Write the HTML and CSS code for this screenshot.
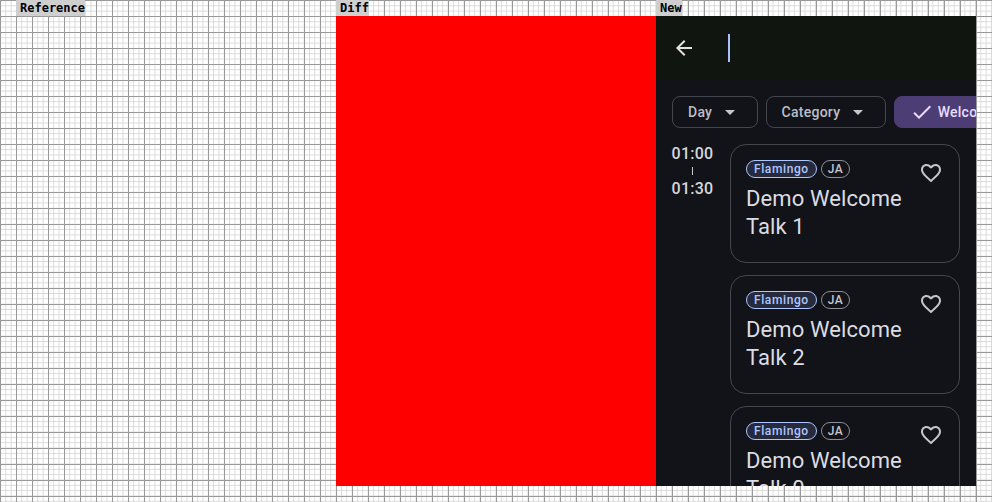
FILE: index.html
```html
<!DOCTYPE html>
<html lang="en">
<head>
<meta charset="utf-8">
<title>Timetable search comparison</title>
<link rel="stylesheet" href="styles.css">
</head>
<body>
<main class="stage">
  <section class="col">
    <div class="label">Reference</div>
    <div class="panel"></div>
  </section>
  <section class="col">
    <div class="label">Diff</div>
    <div class="panel panel-diff"></div>
  </section>
  <section class="col">
    <div class="label">New</div>
    <div class="panel app">
      <header class="topbar">
        <svg class="icon" viewBox="0 0 24 24"><path d="M20 11H7.83l5.59-5.59L12 4l-8 8 8 8 1.41-1.41L7.83 13H20v-2z"/></svg>
        <div class="field"><span class="caret"></span></div>
      </header>
      <div class="chips">
        <div class="chip">
          <span>Day</span>
          <svg class="icon-drop" viewBox="0 0 24 24"><path d="M7 10l5 5 5-5z"/></svg>
        </div>
        <div class="chip">
          <span>Category</span>
          <svg class="icon-drop" viewBox="0 0 24 24"><path d="M7 10l5 5 5-5z"/></svg>
        </div>
        <div class="chip chip-on">
          <svg class="icon-check" viewBox="0 0 24 24"><path d="M9 16.17L4.83 12l-1.42 1.41L9 19 21 7l-1.41-1.41z"/></svg>
          <span>Welcome Talk</span>
        </div>
      </div>
      <div class="list">
        <div class="slot">
          <div class="time">
            <span>01:00</span>
            <i class="tick"></i>
            <span>01:30</span>
          </div>
          <div class="cards">
            <article class="card">
              <div class="card-body">
                <div class="tags"><span class="tag tag-room">Flamingo</span><span class="tag">JA</span></div>
                <h2 class="title">Demo Welcome Talk 1</h2>
              </div>
              <svg class="heart" viewBox="0 0 24 24"><path d="M16.5 3c-1.74 0-3.41.81-4.5 2.09C10.91 3.81 9.24 3 7.5 3 4.42 3 2 5.42 2 8.5c0 3.78 3.4 6.86 8.55 11.54L12 21.35l1.45-1.32C18.6 15.36 22 12.28 22 8.5 22 5.42 19.58 3 16.5 3zm-4.4 15.55l-.1.1-.1-.1C7.14 14.24 4 11.39 4 8.5 4 6.5 5.5 5 7.5 5c1.54 0 3.04.99 3.57 2.36h1.87C13.46 5.99 14.96 5 16.5 5c2 0 3.5 1.5 3.5 3.5 0 2.89-3.14 5.74-7.9 10.05z"/></svg>
            </article>
            <article class="card">
              <div class="card-body">
                <div class="tags"><span class="tag tag-room">Flamingo</span><span class="tag">JA</span></div>
                <h2 class="title">Demo Welcome Talk 2</h2>
              </div>
              <svg class="heart" viewBox="0 0 24 24"><path d="M16.5 3c-1.74 0-3.41.81-4.5 2.09C10.91 3.81 9.24 3 7.5 3 4.42 3 2 5.42 2 8.5c0 3.78 3.4 6.86 8.55 11.54L12 21.35l1.45-1.32C18.6 15.36 22 12.28 22 8.5 22 5.42 19.58 3 16.5 3zm-4.4 15.55l-.1.1-.1-.1C7.14 14.24 4 11.39 4 8.5 4 6.5 5.5 5 7.5 5c1.54 0 3.04.99 3.57 2.36h1.87C13.46 5.99 14.96 5 16.5 5c2 0 3.5 1.5 3.5 3.5 0 2.89-3.14 5.74-7.9 10.05z"/></svg>
            </article>
            <article class="card">
              <div class="card-body">
                <div class="tags"><span class="tag tag-room">Flamingo</span><span class="tag">JA</span></div>
                <h2 class="title">Demo Welcome Talk 0</h2>
              </div>
              <svg class="heart" viewBox="0 0 24 24"><path d="M16.5 3c-1.74 0-3.41.81-4.5 2.09C10.91 3.81 9.24 3 7.5 3 4.42 3 2 5.42 2 8.5c0 3.78 3.4 6.86 8.55 11.54L12 21.35l1.45-1.32C18.6 15.36 22 12.28 22 8.5 22 5.42 19.58 3 16.5 3zm-4.4 15.55l-.1.1-.1-.1C7.14 14.24 4 11.39 4 8.5 4 6.5 5.5 5 7.5 5c1.54 0 3.04.99 3.57 2.36h1.87C13.46 5.99 14.96 5 16.5 5c2 0 3.5 1.5 3.5 3.5 0 2.89-3.14 5.74-7.9 10.05z"/></svg>
            </article>
          </div>
        </div>
      </div>
    </div>
  </section>
</main>
</body>
</html>
```
FILE: styles.css
```css
* { box-sizing: border-box; }

html, body {
  margin: 0;
  height: 100%;
  overflow: hidden;
}

body {
  background-color: #fff;
  background-image:
    linear-gradient(to right, #999 1px, transparent 1px),
    linear-gradient(to bottom, #999 1px, transparent 1px),
    linear-gradient(to right, #d8d8d8 1px, transparent 1px),
    linear-gradient(to bottom, #d8d8d8 1px, transparent 1px);
  background-size: 16px 16px, 16px 16px, 5.3333px 5.3333px, 5.3333px 5.3333px;
}

.stage {
  display: flex;
  padding-left: 16px;
}

.col {
  width: 320px;
  flex: none;
}

.label {
  display: table;
  height: 16px;
  padding-left: 4px;
  background: #cfcfcf;
  color: #000;
  font: bold 12px/16px "DejaVu Sans Mono", monospace;
}

.panel { height: 470px; }
.panel-diff { background: #ff0000; }

.app {
  display: flex;
  flex-direction: column;
  overflow: hidden;
  background: #111318;
  font-family: Roboto, sans-serif;
}

.topbar {
  display: flex;
  align-items: center;
  flex: none;
  height: 64px;
  padding-left: 16px;
  background: #101510;
}

.icon {
  width: 24px;
  height: 24px;
  fill: #e2e3dc;
}

.field {
  display: flex;
  align-items: center;
  margin-left: 32px;
}

.caret {
  width: 2px;
  height: 28px;
  background: #a9c1fa;
}

.chips {
  display: flex;
  flex: none;
  gap: 8px;
  padding: 16px 0 16px 16px;
}

.chip {
  display: flex;
  align-items: center;
  flex: none;
  gap: 5.4px;
  height: 32px;
  padding: 0 15px;
  border: 1px solid #44474e;
  border-radius: 8px;
  color: #bcbec8;
  font-size: 14px;
  font-weight: 500;
  letter-spacing: 0.25px;
}

.chip-on {
  gap: 4px;
  border-color: #4c3d75;
  background: #4c3d75;
  color: #e9ddff;
}

.icon-drop {
  width: 24px;
  height: 24px;
  fill: #c4c6d0;
}

.icon-check {
  width: 24px;
  height: 24px;
  fill: #e9ddff;
}

.slot {
  display: flex;
  padding: 0 16px;
  gap: 17px;
}

.time {
  display: flex;
  flex-direction: column;
  align-items: center;
  flex: none;
  width: 41px;
  padding-top: 1px;
  color: #d6d6dd;
  font-size: 16px;
  font-weight: 500;
  line-height: 18px;
  letter-spacing: 0.25px;
}

.tick {
  width: 1px;
  height: 8px;
  margin: 4px 0 5px;
  background: #c4c6d0;
}

.card-body { flex: 1; }

.cards {
  display: flex;
  flex-direction: column;
  flex: 1;
  gap: 12px;
}

.card {
  display: flex;
  flex: none;
  height: 119px;
  padding: 15px 16px 0 15px;
  border: 1px solid #44474e;
  border-radius: 16px;
}

.tags {
  display: flex;
  gap: 4px;
}

.tag {
  height: 18px;
  padding: 0 6px;
  border: 1px solid #8e9099;
  border-radius: 9px;
  color: #c4c6d0;
  font-size: 12px;
  font-weight: 500;
  line-height: 16px;
  letter-spacing: 0.5px;
}

.tag-room {
  padding: 0 7px;
  border-color: #b0c6ff;
  background: #252a3d;
  color: #b0c6ff;
  letter-spacing: 0.6px;
}

.title {
  margin: 7px 0 0;
  color: #dcdce3;
  font-size: 22px;
  font-weight: 400;
  line-height: 28px;
  letter-spacing: 0.1px;
}

.heart {
  flex: none;
  width: 24px;
  height: 24px;
  margin-top: 1px;
  fill: #c4c6d0;
}
```
